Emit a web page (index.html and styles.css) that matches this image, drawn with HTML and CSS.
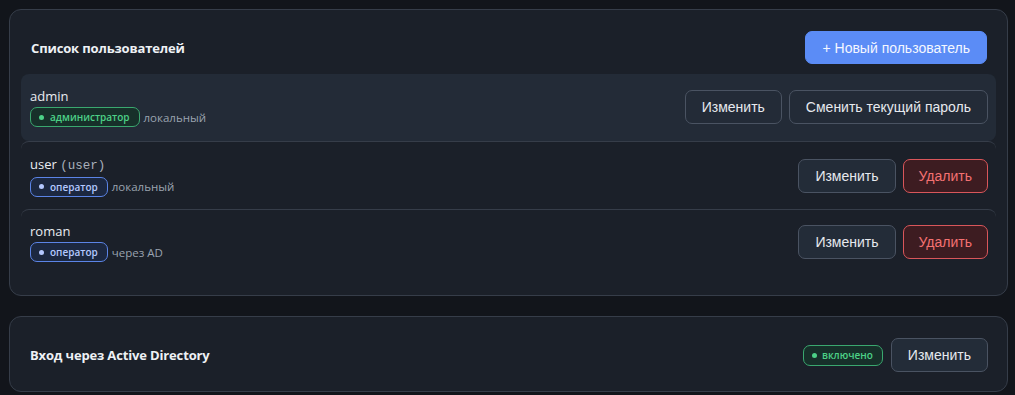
FILE: index.html
```html
<!DOCTYPE html>
<html lang="ru">
<head>
<meta charset="utf-8">
<link rel="stylesheet" href="styles.css">
</head>
<body>
<section class="card">
  <div class="card-head">
    <h2 class="title">Список пользователей</h2>
    <button class="btn btn-primary">+ Новый пользователь</button>
  </div>
  <div class="list">
    <div class="row row-current">
      <div class="info">
        <div class="name">admin</div>
        <div class="meta"><span class="badge badge-green"><i class="dot"></i>администратор</span><span class="src">локальный</span></div>
      </div>
      <div class="actions">
        <button class="btn btn-ghost">Изменить</button>
        <button class="btn btn-ghost">Сменить текущий пароль</button>
      </div>
    </div>
    <div class="row">
      <div class="info">
        <div class="name">user <span class="login">(user)</span></div>
        <div class="meta"><span class="badge badge-blue"><i class="dot"></i>оператор</span><span class="src">локальный</span></div>
      </div>
      <div class="actions">
        <button class="btn btn-ghost btn-fill">Изменить</button>
        <button class="btn btn-danger">Удалить</button>
      </div>
    </div>
    <div class="row">
      <div class="info">
        <div class="name">roman</div>
        <div class="meta"><span class="badge badge-blue"><i class="dot"></i>оператор</span><span class="src">через AD</span></div>
      </div>
      <div class="actions">
        <button class="btn btn-ghost btn-fill">Изменить</button>
        <button class="btn btn-danger">Удалить</button>
      </div>
    </div>
  </div>
</section>
<section class="card card-ad">
  <h2 class="title">Вход через Active Directory</h2>
  <div class="actions">
    <span class="badge badge-green badge-sm"><i class="dot"></i>включено</span>
    <button class="btn btn-ghost btn-fill">Изменить</button>
  </div>
</section>
</body>
</html>
```
FILE: styles.css
```css
* { box-sizing: border-box; }
html, body { margin: 0; }
body {
  background: #12151b;
  padding: 9px 7px 0 9px;
  font-family: "Open Sans", "Noto Sans", sans-serif;
  color: #e6e9ee;
}
.card {
  background: #1b2029;
  border: 1px solid #363d49;
  border-radius: 12px;
  padding: 21px 11px 21px 11px;
}
.card + .card { margin-top: 20px; }
.card-head {
  display: flex;
  align-items: center;
  justify-content: space-between;
  padding: 0 9px 0 10px;
  margin-bottom: 10px;
}
.title {
  margin: 0;
  font-size: 13px;
  font-weight: 700;
  color: #eef1f5;
  letter-spacing: -0.15px;
}
.btn {
  font-family: "Liberation Sans", Arial, sans-serif;
  font-size: 14px;
  height: 34px;
  padding: 0 16px;
  border-radius: 7px;
  border: 1px solid #4a5362;
  background: transparent;
  color: #e6e9ee;
  cursor: pointer;
}
.btn-primary {
  background: #5b8cf6;
  border-color: #5b8cf6;
  color: #f4f7ff;
  height: 33px;
  padding: 0 16px;
}
.btn-fill { background: #232c38; }
.btn-danger {
  background: #3d1c21;
  border-color: #d9565a;
  color: #f47171;
  padding: 0 15px;
}
.list { display: flex; flex-direction: column; }
.row {
  display: flex;
  align-items: center;
  justify-content: space-between;
  border-top: 1px solid #363d49;
  border-radius: 8px;
  padding: 12px 8px 12px 9px;
  height: 68px;
}
.row:last-child { height: 65px; }
.row-current {
  background: #232b37;
  border-top-color: transparent;
  padding-top: 10px;
  padding-bottom: 12px;
  height: 67px;
}
.info { display: flex; flex-direction: column; gap: 2px; }
.name { font-size: 13px; color: #e9ecf1; line-height: 18px; }
.login {
  font-family: "Liberation Mono", "DejaVu Sans Mono", monospace;
  font-size: 12.5px;
  color: #a9b0bb;
}
.meta { display: flex; align-items: center; gap: 4px; }
.src { font-size: 11.5px; color: #9aa3af; }
.badge {
  display: inline-flex;
  align-items: center;
  gap: 6px;
  height: 20px;
  padding: 0 9px 0 8px;
  border-radius: 7px;
  font-size: 10px;
  font-weight: 600;
  border: 1px solid;
}
.badge-green {
  color: #4cd187;
  border-color: #3aa86f;
  background: #17302a;
}
.badge-blue {
  color: #b4c8ff;
  border-color: #5b84e6;
  background: #1c2840;
}
.dot {
  width: 5px; height: 5px;
  border-radius: 50%;
  background: currentColor;
}
.actions { display: flex; align-items: center; gap: 7px; }
.card-ad {
  display: flex;
  align-items: center;
  justify-content: space-between;
  padding: 20px 19px 18px 20px;
  min-height: 76px;
}
.badge-sm { height: 21px; gap: 5px; margin-right: 1px; }
```
